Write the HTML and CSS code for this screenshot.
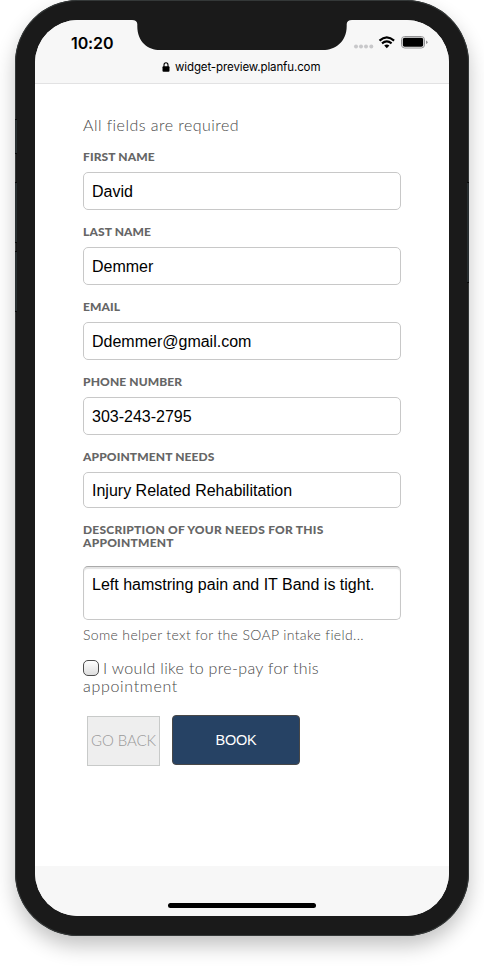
FILE: index.html
```html
<!DOCTYPE html>
<html lang="en">
<head>
<meta charset="utf-8">
<meta name="viewport" content="width=device-width">
<title>Book an appointment</title>
<link rel="stylesheet" href="styles.css">
</head>
<body>
<div class="phone">
  <span class="side-key mute"></span>
  <span class="side-key volume-up"></span>
  <span class="side-key volume-down"></span>
  <span class="side-key power"></span>
  <svg class="notch" width="226" height="34" viewBox="0 0 226 34"><path d="M0 0H226V4H223Q218 4 217.700 8V10C217.700 26 206 34 194 34H31C19 34 8.300 26 8.300 10V8Q8 4 3 4H0Z" fill="#1a1a1a"/></svg>
  <div class="screen">
    <header class="browser-bar">
      <div class="status">
        <span class="time">10:20</span>
        <svg class="indicators" width="76" height="16" viewBox="0 0 76 16">
          <g fill="#c8c8ca"><circle cx="4" cy="11.500" r="2"/><circle cx="9" cy="11.500" r="2"/><circle cx="14" cy="11.500" r="2"/><circle cx="19.300" cy="11.500" r="2"/></g>
          <g fill="none" stroke="#000" stroke-width="2.100"><path d="M27.500 5.600Q34.800 -1 42.100 5.600"/><path d="M30 8.400Q34.800 4.200 39.600 8.400"/></g>
          <path d="M32.200 10.600Q34.800 8.600 37.400 10.600L34.800 13.200Z"/>
          <rect x="49.500" y="1.500" width="23" height="11.500" rx="3.200" fill="none" stroke="#929294"/>
          <rect x="50.800" y="2.800" width="20.400" height="8.900" rx="1.800"/>
          <path d="M74 5.400Q75.600 6 75.600 7.200T74 9Z" fill="#929294"/>
        </svg>
      </div>
      <div class="address">
        <svg width="8" height="10" viewBox="0 0 8 10"><rect x=".5" y="4.300" width="7" height="5.500" rx="1"/><path d="M2 5V3A2 2.200 0 0 1 6 3V5" fill="none" stroke="#000" stroke-width="1.100"/></svg>
        <span>widget-preview.planfu.com</span>
      </div>
    </header>
    <form class="form">
      <p class="intro">All fields are required</p>
      <div class="field"><label for="first">FIRST NAME</label><input id="first" value="David"></div>
      <div class="field"><label for="last">LAST NAME</label><input id="last" value="Demmer"></div>
      <div class="field"><label for="email">EMAIL</label><input id="email" value="Ddemmer@gmail.com"></div>
      <div class="field"><label for="phone">PHONE NUMBER</label><input id="phone" value="303-243-2795"></div>
      <div class="field needs"><label for="needs">APPOINTMENT NEEDS</label><input id="needs" value="Injury Related Rehabilitation"></div>
      <div class="field description"><label for="description">DESCRIPTION OF YOUR NEEDS FOR THIS<br>APPOINTMENT</label><textarea id="description">Left hamstring pain and IT Band is tight.</textarea></div>
      <p class="helper">Some helper text for the SOAP intake field...</p>
      <label class="prepay"><input type="checkbox"><span class="prepay-first">I would like to pre-pay for this</span><br><span class="prepay-last">appointment</span></label>
      <div class="actions">
        <button class="back" type="button">GO BACK</button>
        <button class="book" type="button">BOOK</button>
      </div>
    </form>
    <footer class="bottom-bar"><span class="home"></span></footer>
  </div>
</div>
</body>
</html>
```
FILE: styles.css
```css
* { box-sizing: border-box; }
html { overflow: hidden; }
body { margin: 0; width: 484px; height: 966px; overflow: hidden; background: #fff; }
.phone {
  position: relative;
  width: 454px;
  height: 936px;
  margin-left: 15px;
  padding: 20px;
  border-radius: 63px;
  background: #1a1a1a;
  box-shadow: inset 0 0 0 1px #343838, 0 10px 20px rgba(0, 0, 0, .24);
}
.screen {
  display: flex;
  flex-direction: column;
  height: 896px;
  border-radius: 43px;
  overflow: hidden;
  background: #fff;
}
.notch { position: absolute; left: 114px; top: 16px; }
.side-key { position: absolute; left: 0; width: 2px; background: #292f31; border: solid #080808; border-width: 1px 0; }
.mute { top: 119px; height: 35px; }
.volume-up { top: 182px; height: 61px; }
.volume-down { top: 251px; height: 61px; }
.power { top: 182px; left: auto; right: 0; height: 101px; }
.browser-bar { height: 64px; flex: none; background: #f7f7f7; border-bottom: 1px solid #e2e2e3; }
.status { display: flex; justify-content: space-between; height: 40px; padding: 13px 21px 0 36px; }
.time { font: 600 16px/20px Inter, sans-serif; letter-spacing: -.1px; }
.indicators { margin-top: 2px; }
.address { display: flex; align-items: center; gap: 5px; height: 14px; padding-left: 127px; font: 11.5px/14px Inter, sans-serif; letter-spacing: -.11px; white-space: nowrap; }
.form { flex: 1; padding: 31px 48px 0; color: #666; font-family: Lato, sans-serif; }
.intro { margin: 0 0 5px; color: #484848; font-size: 16px; line-height: 20px; font-weight: 300; letter-spacing: .46px; }
.field { height: 75px; padding-top: 10px; }
.field label { display: block; height: 22px; font-size: 12px; line-height: 13px; font-weight: 900; letter-spacing: .12px; white-space: nowrap; }
input, textarea { display: block; margin: 0; outline: 0; }
.field input, textarea {
  width: 318px;
  height: 38px;
  padding: 2px 8px 0;
  border: 1px solid #c8c8c8;
  border-radius: 5px;
  background: #fff;
  color: #000;
  font: 16px "Liberation Sans", sans-serif;
}
.field.needs { height: 73px; }
.needs input { height: 36px; }
.field.description { height: 113px; padding-top: 10px; }
.description label { height: 43px; letter-spacing: .23px; }
.description textarea { height: 54px; padding: 9px 8px; line-height: 18px; resize: none; overflow: hidden; box-shadow: inset 0 2px 1px #e4e4e4; border-top-color: #aaa; }
.helper { margin: 0; color: #484848; font-size: 14px; line-height: 18px; font-weight: 300; letter-spacing: .35px; }
.prepay { display: block; margin-top: 15px; height: 36px; color: #484848; font-size: 16px; line-height: 18px; font-weight: 300; letter-spacing: .33px; white-space: nowrap; }
.prepay-last { letter-spacing: .68px; }
.prepay input { float: left; width: 16px; height: 16px; margin: 1px 4px 0 0; appearance: none; border: 1px solid #4d4d4d; border-radius: 5px; background: linear-gradient(#fff, #ddd); }
.actions { display: flex; gap: 12px; margin-top: 20px; padding-left: 4px; }
button { padding: 0; }
.back { width: 73px; height: 50px; margin-top: 1px; padding-bottom: 2px; border: 1px solid #c8cac9; background: #eee; color: #999; font: 300 15px Lato, sans-serif; letter-spacing: -.1px; white-space: nowrap; }
.book { width: 128px; height: 50px; border: 1px solid #484848; border-radius: 4px; background: #264264; color: #fff; font: 14.5px "Liberation Sans", sans-serif; letter-spacing: -.2px; }
.bottom-bar { height: 50px; flex: none; padding-top: 37px; background: #f7f7f7; }
.home { display: block; width: 148px; height: 5px; margin-left: 133px; border-radius: 3px; background: #000; }
```
